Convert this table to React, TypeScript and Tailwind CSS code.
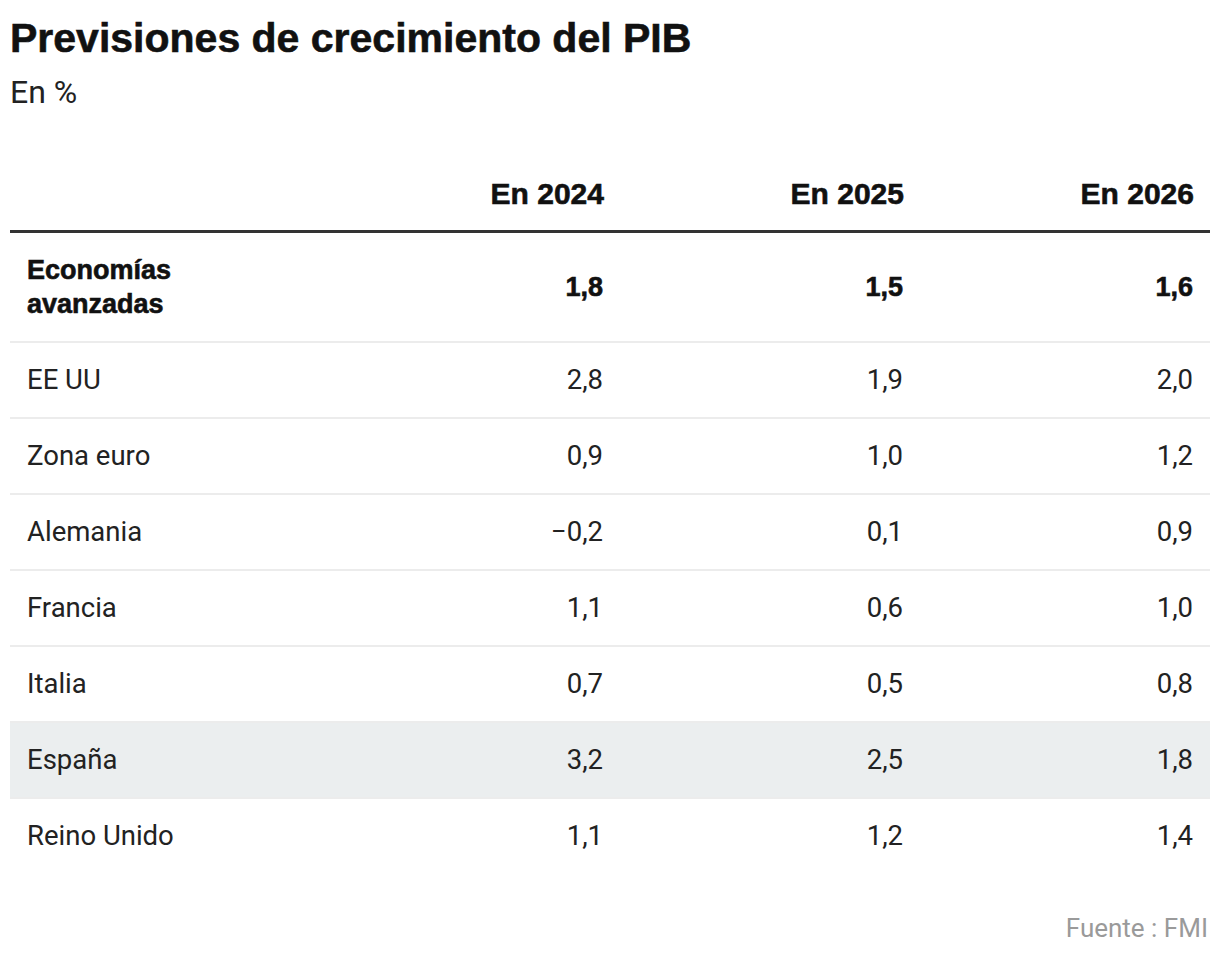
import React from 'react';

type Row = {
  label: string;
  values: string[];
  bold?: boolean;
  highlight?: boolean;
};

const rows: Row[] = [
  { label: 'Economías avanzadas', values: ['1,8', '1,5', '1,6'], bold: true },
  { label: 'EE UU', values: ['2,8', '1,9', '2,0'] },
  { label: 'Zona euro', values: ['0,9', '1,0', '1,2'] },
  { label: 'Alemania', values: ['−0,2', '0,1', '0,9'] },
  { label: 'Francia', values: ['1,1', '0,6', '1,0'] },
  { label: 'Italia', values: ['0,7', '0,5', '0,8'] },
  { label: 'España', values: ['3,2', '2,5', '1,8'], highlight: true },
  { label: 'Reino Unido', values: ['1,1', '1,2', '1,4'] },
];

const years = ['En 2024', 'En 2025', 'En 2026'];

// regular text is a narrowish grotesque, the bold one is wide and heavy
const regular = "font-['Roboto','Liberation_Sans',sans-serif] font-normal";
const bold = "font-['Liberation_Sans','Arial',sans-serif] font-bold [-webkit-text-stroke:0.6px_#111]";

export default function App() {
  return (
    <div className={`${regular} min-h-screen bg-white px-[10px] pt-[13px] text-[#222]`}>
      {/* Title */}
      <h1 className={`${bold} text-[41px] leading-[50px] text-[#111]`}>
        Previsiones de crecimiento del PIB
      </h1>
      <p className="mt-[9px] text-[32px] leading-[40px] text-[#222]">En %</p>

      {/* Table */}
      <div className="mt-[65px] w-[1200px]">
        <div className="grid grid-cols-[310px_300px_300px_290px] border-b-[3px] border-[#333] pb-[19px]">
          <div />
          {years.map((y) => (
            <div key={y} className={`${bold} px-[16px] text-right text-[30px] leading-[34px] text-[#111]`}>
              {y}
            </div>
          ))}
        </div>

        {rows.map((r) => (
          <div
            key={r.label}
            className={`grid grid-cols-[310px_300px_300px_290px] items-center py-[20px] ${
              r.highlight ? 'bg-[#ebeeef]' : ''
            } ${r.label === 'Reino Unido' ? 'border-b-2 border-transparent' : 'border-b-2 border-[#ececec]'} ${
              r.bold ? `${bold} text-[#111]` : ''
            }`}
          >
            <div className={`px-[17px] ${r.bold ? 'w-[200px] text-[27px]' : 'text-[27.5px]'} leading-[34px]`}>
              {r.label}
            </div>
            {r.values.map((v, i) => (
              <div
                key={i}
                className={`px-[17px] text-right ${r.bold ? 'text-[27px]' : 'text-[27.5px]'} leading-[34px]`}
              >
                {v}
              </div>
            ))}
          </div>
        ))}
      </div>

      {/* Source */}
      <div className="mt-[38px] w-[1200px] pr-[2px] text-right text-[26px] leading-[30px] text-[#9a9a9a]">
        Fuente : FMI
      </div>
    </div>
  );
}
